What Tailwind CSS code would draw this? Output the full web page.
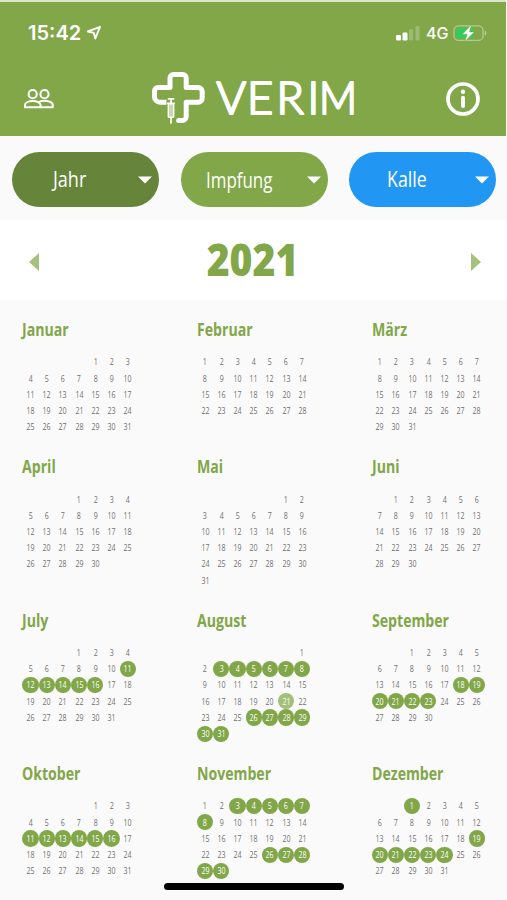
<!DOCTYPE html>
<html lang="de">
  <head>
    <meta charset="UTF-8" />
    <meta name="viewport" content="width=device-width, initial-scale=1.0" />
    <title>Verim</title>
    <script src="https://cdn.jsdelivr.net/npm/@tailwindcss/browser@4"></script>
  </head>
  <body class="bg-[#fafafa] font-['Open_Sans',sans-serif]">
    <div class="relative w-[507px] h-[900px] overflow-hidden">
      <!-- Header -->
      <header class="h-[136px] mr-px border-t-2 border-[#dbe6cb] bg-[#81a749] text-white">
        <div class="h-[62px] pl-7 pr-[19px] flex items-center justify-between font-['Inter',sans-serif]">
          <div class="flex items-center gap-1">
            <span class="text-[20px] leading-none font-semibold w-[54px]">15:42</span>
            <svg class="w-4 h-4" viewBox="0 0 16 16" fill="none" stroke="currentColor" stroke-width="1.9" stroke-linejoin="round">
              <path d="M14 1.800L1.800 6.500L7.800 7.900L9.300 13.500Z" />
            </svg>
          </div>
          <div class="flex items-center">
            <svg class="w-6 h-4" viewBox="0 0 24 16" fill="#fff">
              <rect x="0" y="10" width="5" height="5.500" rx="1.200" />
              <rect x="6.500" y="7.500" width="5" height="8" rx="1.200" />
              <rect x="13" y="4" width="4" height="11.500" rx="1.200" opacity=".22" />
              <rect x="19.500" y="1" width="4" height="14.500" rx="1.200" opacity=".22" />
            </svg>
            <span class="ml-[6px] w-[27px] text-[16px] leading-none font-medium">4G</span>
            <svg class="w-[34px] h-[18px]" viewBox="0 0 34 18">
              <rect x="1" y="1.800" width="29" height="14.600" rx="4.500" fill="none" stroke="#fff" stroke-opacity=".4" stroke-width="1.300" />
              <path d="M31.800 6.500v5c2-.9 2-4.100 0-5z" fill="#fff" fill-opacity=".5" />
              <path d="M6 3.600h14v11H6a3 3 0 0 1-3-3v-5a3 3 0 0 1 3-3z" fill="#33cb5b" />
              <path d="M18.500 .800L9.300 10.200h4.900l-2.300 7.200L21.300 7.900h-4.900z" fill="#fff" stroke="#81a749" stroke-width=".5" />
            </svg>
          </div>
        </div>

        <div class="h-[70px] pl-[23px] pr-[26px] flex items-center">
          <svg class="w-8 h-5" viewBox="0 0 32 20" fill="none" stroke="currentColor" stroke-width="2">
            <circle cx="9.700" cy="5.200" r="4.100" />
            <circle cx="21.500" cy="5.200" r="4.100" />
            <path d="M2 18.300v-2c0-5.600 15.600-5.600 15.600 0v2zM15 13.500c4-2.700 14.800-2.200 14.800 2.800v2H17" stroke-linejoin="round" />
          </svg>
          <svg class="w-[212px] h-[56px] ml-[96px] mr-auto" viewBox="0 0 212 56" fill="none">
            <path d="M16 31.200H9a5.500 5.500 0 0 1-5.500-5.500v-5.700A3.500 3.500 0 0 1 7 16.500h12V7a3.500 3.500 0 0 1 3.500-3.500h9.200A3.500 3.500 0 0 1 35.200 7v9.500h12a4 4 0 0 1 4 4v6.700a4 4 0 0 1-4 4h-12v14.300a4 4 0 0 1-4 4h-3.500" stroke="#fff" stroke-width="5" stroke-linecap="round" stroke-linejoin="round" />
            <rect x="15.500" y="26" width="9" height="24" fill="#81a749" />
            <path d="M17.500 27.900h5M16.800 32.300h6.400M20 28v4M20 47v5" stroke="#fff" stroke-width="1.700" stroke-linecap="round" />
            <rect x="17.300" y="32.800" width="5.400" height="13.500" rx=".8" fill="#c8d9ae" stroke="#fff" stroke-width="1.400" />
            <g class="font-['Lato',sans-serif] text-[45px] font-light" fill="#fff" stroke="#fff" stroke-width="2.200" stroke-linejoin="round">
              <text x="65.500 96 125.500 156.500" y="43">VERI</text>
              <text x="168" y="43" textLength="38" lengthAdjust="spacingAndGlyphs">M</text>
            </g>
          </svg>
          <svg class="w-[34px] h-[34px]" viewBox="0 0 34 34" fill="none" stroke="currentColor">
            <circle cx="17" cy="17" r="15" stroke-width="3.700" />
            <path d="M17 15.800v8.200" stroke-width="4" stroke-linecap="round" />
            <circle cx="17" cy="9.700" r="2.200" fill="currentColor" stroke="none" />
          </svg>
        </div>
      </header>

      <!-- Filters -->
      <div class="h-[84px] pt-4 pl-3 pr-[11px] flex justify-between text-white text-[22px] leading-[50px] font-medium">
        <button class="w-[147px] h-[55px] rounded-full bg-[#66853a] pl-[41px] pr-[7px] flex items-center justify-between">
          <span class="w-[36px] pb-1 text-left"><span class="inline-block origin-left scale-x-[.82]">Jahr</span></span>
          <svg class="w-[14px] h-2" viewBox="0 0 14 8" fill="currentColor"><path d="M0 .500h14l-7 7z" /></svg>
        </button>
        <button class="w-[147px] h-[55px] rounded-full bg-[#81a749] pl-[25px] pr-[7px] flex items-center justify-between">
          <span class="w-[66px] pb-0.5 text-left"><span class="inline-block origin-left scale-x-[.77]">Impfung</span></span>
          <svg class="w-[14px] h-2" viewBox="0 0 14 8" fill="currentColor"><path d="M0 .500h14l-7 7z" /></svg>
        </button>
        <button class="w-[147px] h-[55px] rounded-full bg-[#2196f3] pl-[38px] pr-[7px] flex items-center justify-between">
          <span class="w-[40px] pb-1 text-left"><span class="inline-block origin-left scale-x-[.81]">Kalle</span></span>
          <svg class="w-[14px] h-2" viewBox="0 0 14 8" fill="currentColor"><path d="M0 .500h14l-7 7z" /></svg>
        </button>
      </div>

      <!-- Year switcher -->
      <div class="h-20 bg-white pl-[29px] pr-[26px] flex items-center justify-between text-[#81a749]">
        <svg class="w-[10px] h-[18px] mt-1" viewBox="0 0 10 18" fill="#a6c07e"><path d="M10 0v18L0 9z" /></svg>
        <span class="mr-[4px] pb-0.5 text-[44px] leading-none font-extrabold scale-x-[.89]">2021</span>
        <svg class="w-[10px] h-[18px] mt-1" viewBox="0 0 10 18" fill="#a6c07e"><path d="M0 0v18l10-9z" /></svg>
      </div>

      <!-- Months -->
      <main id="year" class="pl-[22.400px] pt-[19px] grid grid-cols-[repeat(3,174.600px)]"></main>

      <div class="absolute left-[164px] top-[883px] w-[180px] h-[7px] rounded-full bg-black"></div>
    </div>

    <script>
      // name, empty cells before the 1st, number of days, marked days, today
      const months = [
        ["Januar", 4, 31, []],
        ["Februar", 0, 28, []],
        ["März", 0, 31, []],
        ["April", 3, 30, []],
        ["Mai", 5, 31, []],
        ["Juni", 1, 30, []],
        ["July", 3, 31, [11, 12, 13, 14, 15, 16]],
        ["August", 6, 31, [3, 4, 5, 6, 7, 8, 26, 27, 28, 29, 30, 31], 21],
        ["September", 2, 30, [18, 19, 20, 21, 22, 23]],
        ["Oktober", 4, 31, [11, 12, 13, 14, 15, 16]],
        ["November", 0, 30, [3, 4, 5, 6, 7, 8, 26, 27, 28, 29, 30]],
        ["Dezember", 2, 31, [1, 19, 20, 21, 22, 23, 24]],
      ];

      document.getElementById("year").innerHTML = months
        .map(([name, offset, count, marked, today]) => {
          let cells = "<span></span>".repeat(offset);
          for (let day = 1; day <= count; day++) {
            let look = "text-[#707070]";
            if (marked.includes(day)) look = "rounded-full bg-[#81a749] text-white";
            if (day === today) look = "rounded-full bg-[#a3bf7a] text-white";
            cells += `<span class="h-[16.200px] flex items-center justify-center ${look}"><span class="scale-x-[.74]">${day}</span></span>`;
          }
          return `
            <section class="pb-[21.300px]">
              <h2 class="h-6 text-[17px] leading-[22px] font-bold text-[#81a749] whitespace-nowrap origin-left scale-x-[.83]">${name}</h2>
              <div class="pt-[11px] grid grid-cols-[repeat(7,16.200px)] text-[9.500px] leading-none">${cells}</div>
            </section>`;
        })
        .join("");
    </script>
  </body>
</html>
